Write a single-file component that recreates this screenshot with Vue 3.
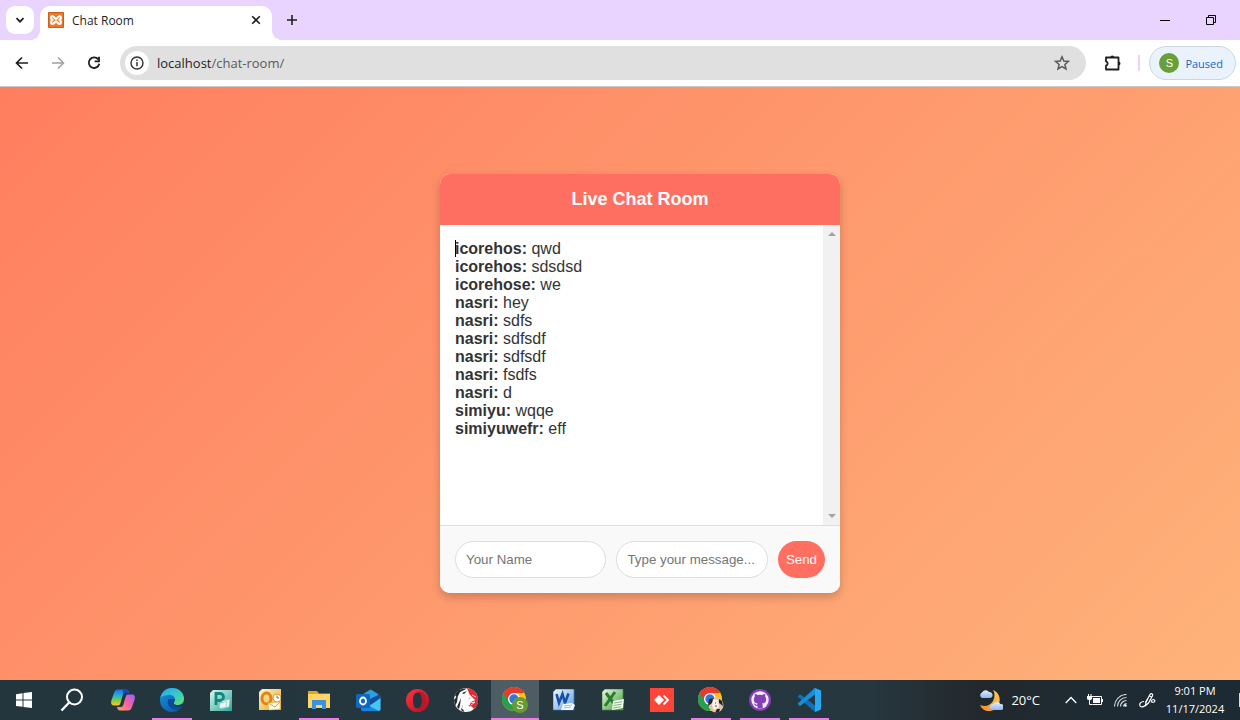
<script setup>
import { ref } from 'vue'

const name = ref('')
const draft = ref('')
const messages = ref([
  { from: 'icorehos', text: 'qwd' },
  { from: 'icorehos', text: 'sdsdsd' },
  { from: 'icorehose', text: 'we' },
  { from: 'nasri', text: 'hey' },
  { from: 'nasri', text: 'sdfs' },
  { from: 'nasri', text: 'sdfsdf' },
  { from: 'nasri', text: 'sdfsdf' },
  { from: 'nasri', text: 'fsdfs' },
  { from: 'nasri', text: 'd' },
  { from: 'simiyu', text: 'wqqe' },
  { from: 'simiyuwefr', text: 'eff' },
])

function send() {
  if (!name.value || !draft.value) return
  messages.value.push({ from: name.value, text: draft.value })
  draft.value = ''
}
</script>

<template>
  <div class="desktop">
    <header class="tabstrip">
      <button class="tab-search" aria-label="Search tabs">
        <svg width="12" height="12" viewBox="0 0 12 12"><path d="M2.5 4.2 6 7.700 9.500 4.200" fill="none" stroke="#1f1f1f" stroke-width="1.8" /></svg>
      </button>
      <div class="tab">
        <svg class="favicon" width="16" height="16" viewBox="0 0 16 16">
          <rect width="16" height="16" rx="1" fill="#c95f1c" />
          <rect x="1" y="1" width="14" height="14" fill="#f0772a" />
          <path d="M5.200 4.400C3.200 3.200 2.200 6.200 4.300 7.900 2.200 9.800 3.200 12.900 5.500 11.600 6.800 11 6.600 9.300 8 9.300S9.200 11 10.500 11.600C12.800 12.900 13.800 9.800 11.700 7.900 13.800 6.200 12.800 3.200 10.800 4.400 9.300 5 9.400 6.800 8 6.800S6.700 5 5.200 4.400Z" fill="none" stroke="#fff" stroke-width="2.200" />
        </svg>
        <span class="tab-title">Chat Room</span>
        <button class="tab-close" aria-label="Close tab">
          <svg width="10" height="10" viewBox="0 0 10 10"><path d="M1.200 1.200 8.800 8.800M8.800 1.200 1.200 8.800" stroke="#1f1f1f" stroke-width="1.600" /></svg>
        </button>
      </div>
      <button class="new-tab" aria-label="New tab">
        <svg width="12" height="12" viewBox="0 0 12 12"><path d="M6 1v10M1 6h10" stroke="#1f1f1f" stroke-width="1.600" /></svg>
      </button>
      <div class="window-controls">
        <button aria-label="Minimize">
          <svg width="10" height="10" viewBox="0 0 10 10"><path d="M0 5.500h10" stroke="#000" /></svg>
        </button>
        <button aria-label="Restore">
          <svg width="10" height="10" viewBox="0 0 10 10"><path d="M.5 2.500h7v7h-7zM2.500 2.500v-2h7v7h-2" fill="none" stroke="#000" /></svg>
        </button>
      </div>
    </header>

    <nav class="toolbar">
      <button class="nav-btn" aria-label="Back">
        <svg width="14" height="14" viewBox="0 0 14 14"><path d="M13 7H2M7 1.500 1.500 7 7 12.500" fill="none" stroke="#1f1f1f" stroke-width="1.700" /></svg>
      </button>
      <button class="nav-btn" aria-label="Forward">
        <svg width="14" height="14" viewBox="0 0 14 14"><path d="M1 7h11M7 1.500 12.500 7 7 12.500" fill="none" stroke="#a0a0a0" stroke-width="1.500" /></svg>
      </button>
      <button class="nav-btn" aria-label="Reload">
        <svg width="14" height="14" viewBox="0 0 14 14"><path d="M11.300 3.400A5.300 5.300 0 1 0 12.300 7.800" fill="none" stroke="#1f1f1f" stroke-width="1.800" /><path d="M12 .8V5.300H7.600" fill="none" stroke="#1f1f1f" stroke-width="1.800" /></svg>
      </button>
      <div class="omnibox">
        <button class="site-info" aria-label="View site information">
          <svg width="14" height="14" viewBox="0 0 14 14"><circle cx="7" cy="7" r="6" fill="none" stroke="#333" stroke-width="1.400" /><path d="M7 6v4.300M7 3.400v1.500" stroke="#333" stroke-width="1.500" /></svg>
        </button>
        <div class="url">localhost<span>/chat-room/</span></div>
        <button class="bookmark" aria-label="Bookmark this tab">
          <svg width="16" height="16" viewBox="0 0 16 16"><path d="M8 1.800 9.800 6l4.600.4-3.500 3 1.100 4.500L8 11.500l-4 2.400 1.100-4.500-3.500-3L6.200 6Z" fill="none" stroke="#5a5a5a" stroke-width="1.500" /></svg>
        </button>
      </div>
      <button class="extensions" aria-label="Extensions">
        <svg width="18" height="18" viewBox="0 0 18 18"><path d="M2 3.500h12.500v12H2v-3.800a2.300 2.300 0 0 0 0-4.400Z" fill="none" stroke="#1f1f1f" stroke-width="1.800" stroke-linejoin="round" /><path d="M6.300 3.500a2 2 0 0 1 4 0ZM14.500 7.500a2 2 0 0 1 0 4Z" fill="#1f1f1f" /></svg>
      </button>
      <span class="divider"></span>
      <button class="profile"><span class="avatar">S</span>Paused</button>
    </nav>

    <main class="page">
      <section class="chat">
        <h1 class="chat-header">Live Chat Room</h1>
        <div class="chat-body">
          <div class="messages">
            <span class="caret"></span>
            <div v-for="(m, i) in messages" :key="i"><strong>{{ m.from }}:</strong> {{ m.text }}</div>
          </div>
          <div class="scrollbar">
            <svg width="8" height="4" viewBox="0 0 8 4"><path d="M0 4 4 0 8 4Z" fill="#a3a3a3" /></svg>
            <svg width="8" height="4" viewBox="0 0 8 4"><path d="M0 0 4 4 8 0Z" fill="#a3a3a3" /></svg>
          </div>
        </div>
        <form class="chat-form" @submit.prevent="send">
          <input v-model="name" type="text" placeholder="Your Name" aria-label="Your Name" />
          <input v-model="draft" type="text" placeholder="Type your message..." aria-label="Type your message" />
          <button type="submit">Send</button>
        </form>
      </section>
    </main>

    <footer class="taskbar">
      <svg class="defs" width="0" height="0" aria-hidden="true">
        <defs>
          <linearGradient id="cop1" x1="0" y1="0" x2="0" y2="1"><stop offset="0" stop-color="#2470dd" /><stop offset=".4" stop-color="#25b5cf" /><stop offset=".7" stop-color="#8acb3b" /><stop offset="1" stop-color="#ffc524" /></linearGradient>
          <linearGradient id="cop2" x1="1" y1="0" x2="0" y2="1"><stop offset="0" stop-color="#a65ff5" /><stop offset=".5" stop-color="#f462a5" /><stop offset="1" stop-color="#ffa346" /></linearGradient>
          <linearGradient id="edge1" x1="0" y1="0" x2="1" y2="1"><stop offset="0" stop-color="#25a6e8" /><stop offset=".5" stop-color="#34c7cf" /><stop offset="1" stop-color="#6be65a" /></linearGradient>
          <linearGradient id="edge2" x1="0" y1="0" x2="1" y2="1"><stop offset="0" stop-color="#1892dc" /><stop offset="1" stop-color="#0d4fa0" /></linearGradient>
          <linearGradient id="opera" x1="0" y1="0" x2="1" y2="1"><stop offset="0" stop-color="#ff3444" /><stop offset="1" stop-color="#b50d20" /></linearGradient>
          <linearGradient id="pub" x1="0" y1="0" x2="1" y2="1"><stop offset="0" stop-color="#ddf7f3" /><stop offset="1" stop-color="#27a597" /></linearGradient>
          <linearGradient id="gold" x1="0" y1="0" x2="1" y2="1"><stop offset="0" stop-color="#fff4cf" /><stop offset="1" stop-color="#eca51c" /></linearGradient>
          <linearGradient id="word" x1="0" y1="0" x2="1" y2="1"><stop offset="0" stop-color="#f4faff" /><stop offset="1" stop-color="#5c9be0" /></linearGradient>
          <linearGradient id="excel" x1="0" y1="0" x2="1" y2="1"><stop offset="0" stop-color="#edf8df" /><stop offset="1" stop-color="#439b3b" /></linearGradient>
          <linearGradient id="moon" x1="1" y1="0" x2="0" y2="1"><stop offset="0" stop-color="#ffd05c" /><stop offset="1" stop-color="#f28c22" /></linearGradient>
          <linearGradient id="cloud" x1="0" y1="0" x2="0" y2="1"><stop offset="0" stop-color="#e5f0ff" /><stop offset="1" stop-color="#8fb5ee" /></linearGradient>
          <g id="chrome">
            <circle cx="12" cy="12" r="12" fill="#fbc116" />
            <path d="M12 12 1.600 6A12 12 0 0 0 12 24l5.200-9Z" fill="#23a050" />
            <path d="M12 6H22.400A12 12 0 0 0 1.600 6L6.800 15Z" fill="#e33b2e" />
            <circle cx="12" cy="12" r="6" fill="#fff" /><circle cx="12" cy="12" r="4.700" fill="#2f76e5" />
          </g>
        </defs>
      </svg>
      <div class="system">
        <button aria-label="Start">
          <svg width="16" height="16" viewBox="0 0 16 16" fill="#fff"><path d="M0 2.200 6.500 1.200V7.500H0ZM7.500 1 16 0V7.500H7.500ZM0 8.500H6.500V14.800L0 13.900ZM7.500 8.500H16V16L7.500 15Z" /></svg>
        </button>
        <button aria-label="Search">
          <svg width="24" height="24" viewBox="0 0 24 24" fill="none" stroke="#fff" stroke-width="2"><circle cx="14.500" cy="9" r="7.500" /><path d="M9.200 14.500 1.500 22.500" stroke-width="2.400" /></svg>
        </button>
      </div>
      <div class="apps">
        <button aria-label="Copilot">
          <svg width="24" height="24" viewBox="0 0 24 24"><path d="M7 1.500H15C17 1.500 17.500 3 18 5H14C12.500 5 12 6 11.500 8L9.500 15C9 17 8 17.500 6 17.500H3C0 17.500-.2 15 .4 12.500L3 5C3.800 2.500 5 1.500 7 1.500Z" fill="url(#cop1)" /><path d="M12 1.500h3c2 0 2.500 1.500 3 3.500h-4c-1 0-1.800.6-2.200 1.800Z" fill="#1649bf" /><path d="M17 22.500H9C7 22.500 6.500 21 6 19H9.500C11.500 19 12 18 12.500 16L14.500 9C15 7 16 6.500 18 6.500H21C24 6.500 24.200 9 23.600 11.500L21 19C20.200 21.500 19 22.500 17 22.500Z" fill="url(#cop2)" /><path d="M14 7.500 10 18" stroke="#24343b" stroke-width="2" /></svg>
        </button>
        <button class="open" aria-label="Edge">
          <svg width="24" height="24" viewBox="0 0 24 24"><circle cx="12" cy="12" r="12" fill="url(#edge2)" /><path d="M.5 10C1.500 4 6 0 12 0c7 0 12 5 12 10.500C24 15 20.500 17.500 16.500 17c-2.500-.3-3.500-1.300-2.500-2.500 3.500-4-1.500-8.500-6-7.500C5 7.500 2 8 .5 10Z" fill="url(#edge1)" /><path d="M8.500 11C6 16 10 22.500 18 22 21 20.500 23 18.500 23.500 16.500c-3.500 2-9 2.500-10-1-.5-1.500 1-2.500.5-4.500Z" fill="#0b4b98" /><path d="M14.200 10.500c1.300 2-1.700 3.500-.4 5.200 1 1.500 5 2 8.200.6l1.700-.5-.5 2.200c-3 1-9 1-10-2.500-.5-1.500.5-3.500 1-5Z" fill="#24343b" /></svg>
        </button>
        <button aria-label="Publisher">
          <svg width="22" height="22" viewBox="0 0 22 22"><path d="M3 1H22V22H0V4Z" fill="url(#pub)" /><path d="M6 16V4.500h4a3.400 3.400 0 0 1 0 7H6" fill="none" stroke="#118a7c" stroke-width="2.800" /><path d="m12 12 8-2-1 8-8 2Z" fill="#f5fcfb" stroke="#6ec3ba" stroke-width=".7" /><path d="m10 14 7-1.500-1 6-7 1Z" fill="#e6f7f5" stroke="#6ec3ba" stroke-width=".6" /></svg>
        </button>
        <button aria-label="Outlook 2010">
          <svg width="22" height="22" viewBox="0 0 22 22"><path d="M3 0H22V21H0V3Z" fill="url(#gold)" /><ellipse cx="7.500" cy="9.500" rx="4.500" ry="5.500" fill="none" stroke="#e38411" stroke-width="3" /><circle cx="18" cy="9" r="4" fill="#fffdf5" stroke="#dca03c" /><path d="M18 6.500V9h2" fill="none" stroke="#777" /><path d="m9 14 12-1v7l-11 1Z" fill="#fffbea" stroke="#e5b04b" stroke-width=".6" /><path d="m9 14 7 4 5-5" fill="none" stroke="#e0a941" /></svg>
        </button>
        <button class="open" aria-label="File Explorer">
          <svg width="22" height="18" viewBox="0 0 22 18"><path d="M0 0h9l2 2.500h11V16H0Z" fill="#e4a51b" /><path d="M0 3h22v14H0Z" fill="#ffd666" /><path d="M4 18V9h14v9h-4v-4H8v4Z" fill="#3d92df" /></svg>
        </button>
        <button aria-label="Outlook">
          <svg width="25" height="23" viewBox="0 0 25 23"><path d="M5 7 14.500.5 24.500 7V20q0 2-2 2H7q-2 0-2-2Z" fill="#126abb" /><path d="M8 4.500 14.500.5 22 5v8l-8 4-6-4Z" fill="#2f9fe0" /><path d="m14 10 10-5v5l-10 6Z" fill="#0f4fa0" /><path d="M24.500 9v11q0 2-2 2H7Z" fill="#47c5f2" /><path d="M5 13l18 9H7q-2 0-2-2Z" fill="#1684d9" /><rect y="5" width="14" height="14" rx="1.500" fill="#0c68c0" /><ellipse cx="7" cy="12" rx="3" ry="3.500" fill="none" stroke="#fff" stroke-width="1.800" /></svg>
        </button>
        <button aria-label="Opera">
          <svg width="23" height="23" viewBox="0 0 23 23"><path fill-rule="evenodd" d="M11.500 0a11.500 11.500 0 1 0 0 23 11.500 11.500 0 0 0 0-23Zm0 3.500c3 0 4.500 3.500 4.500 8s-1.500 8-4.500 8S7 16 7 11.500s1.500-8 4.500-8Z" fill="url(#opera)" /><path d="M11.500 3.500c3-3 9 1 9 8s-6 11-9 8c3 0 4.500-3.500 4.500-8s-1.500-8-4.500-8Z" fill="#b81a2b" /></svg>
        </button>
        <button aria-label="Lion">
          <svg width="24" height="24" viewBox="0 0 24 24"><circle cx="12" cy="12" r="12" fill="#fafafa" /><path d="M13 0A12 12 0 0 1 20 21L16 17l1-4 4-1-5-3-1-4Z" fill="#e12c36" /><path d="M1 7C3 2 8 0 13 .5L6 4 3 10ZM0 12l4-5-1 7-2 4ZM3 19l4-9-1 7-1 4ZM7 22l3-8-1 6 1 4ZM12 16l5 2-4 3ZM8 5l5-2-3 3Z" fill="#22282b" /><path d="m12 4 4 3 5 5-4 2-4-1 2 5 4 2-6 3-5-2 1-8 4-5Z" fill="#fff" /><path d="m14 9 4 1-3 1ZM16 15l5-1-4 3M18 7l4 2" fill="#b41e2a" stroke="#fff" stroke-width=".8" /></svg>
        </button>
        <button class="active" aria-label="Chrome, profile S">
          <svg width="26" height="26" viewBox="0 0 26 26"><use href="#chrome" /><circle cx="18" cy="18" r="8" fill="#659b35" /><text x="18" y="22" text-anchor="middle" class="badge-letter">S</text></svg>
        </button>
        <button aria-label="Word">
          <svg width="22" height="22" viewBox="0 0 22 22"><path d="M3 0H21V21H0V3Z" fill="url(#word)" stroke="#3977c2" stroke-width=".7" /><path d="m3.500 5 2.500 9 3.500-9 2.500 9 3.500-9.500" fill="none" stroke="#1551a7" stroke-width="2.600" /><path d="m10 15 9-1 3 2-2 5H8Z" fill="#f4f9ff" /><path d="m11 17 8-1m-8 3 7-1" stroke="#87aee0" stroke-width=".8" /></svg>
        </button>
        <button aria-label="Excel">
          <svg width="23" height="22" viewBox="0 0 23 22"><path d="M3 0H21V21H0V3Z" fill="url(#excel)" stroke="#438d3c" stroke-width=".7" /><path d="m4 4 9 12M13 3 3 17" stroke="#267e31" stroke-width="3" /><path d="m11 12 11-2-1 9-11 2Z" fill="#f6fcf2" /><path d="m12 14 8-1.300m-8.500 3.800 8-1.300m-8.500 3.800 8-1.300" stroke="#69aa5d" stroke-width=".9" /></svg>
        </button>
        <button aria-label="AnyDesk">
          <svg width="24" height="24" viewBox="0 0 24 24"><path fill="#ff4538" d="M0 0h24v24H0z" /><path d="m9 7 5 5-5 5-5-5Z" fill="#fff" /><path d="m13.500 7.500 4.500 4.500-4.500 4.500" fill="none" stroke="#fff" stroke-width="1.800" /></svg>
        </button>
        <button class="open" aria-label="Chrome, personal profile">
          <svg width="26" height="26" viewBox="0 0 26 26"><use href="#chrome" /><circle cx="18" cy="18" r="7.500" fill="#d8c4b0" /><path d="m11 12 5-1-2 5-4 3ZM21 12l3 2 1 5-4-3ZM19 22l3 0-1 3-4 1Z" fill="#2b2220" /><path d="m15 12 5 1 1 7-5 3-2-4Z" fill="#fff4e9" /><path d="M17 16h1m-1 3h2" stroke="#6b3f2f" /></svg>
        </button>
        <button class="open" aria-label="GitHub Desktop">
          <svg width="22" height="22" viewBox="0 0 22 22"><circle cx="11" cy="11" r="11" fill="#8440b3" /><circle cx="11" cy="11" r="8.700" fill="#f4ecfa" /><path d="M8.500 19.500v-2.700c-2 .5-2.600-.3-3.200-1.500l-.8-.6c1.600-.5 1.900 1.200 3.400 1 .4 0 .7-.8 1-1.100-2.500-.3-4.100-1.500-4.100-4.200 0-1.100.4-2 1-2.700-.2-.7-.2-1.700.2-2.700 1 0 1.800.5 2.600 1a9.500 9.500 0 0 1 4.800 0c.8-.5 1.600-1 2.600-1 .4 1 .4 2 .2 2.700.6.700 1 1.600 1 2.700 0 2.700-1.600 3.900-4.100 4.200.4.400.6 1 .6 1.900v3Z" fill="#8440b3" /></svg>
        </button>
        <button class="open" aria-label="Visual Studio Code">
          <svg width="24" height="24" viewBox="0 0 24 24"><path d="M18 0 24 2.500V21.500L18 24 .5 8.500 3 6.300 18 17.500Z" fill="#0974bd" /><path d="M18 0V6.500L3 18 .5 15.800 17.500.3Z" fill="#178ed8" /><path d="m18 0 6 2.500v19L18 24Z" fill="#29a8ef" /></svg>
        </button>
      </div>
      <div class="tray">
        <button class="weather">
          <svg width="25" height="23" viewBox="0 0 25 23"><path d="M15 1c8 3 9 14 2 19-5 4-13 2-15-4 5 2 10 1 13-4 2-4 2-8 0-11Z" fill="url(#moon)" /><path d="M4 9a3 3 0 0 1 0-5.500A4 4 0 0 1 11 3a3 3 0 0 1 1 6Z" fill="url(#cloud)" /><path d="M15 21a3 3 0 0 1 0-6 4.500 4.500 0 0 1 7.500 0 3 3 0 0 1 .5 6Z" fill="url(#cloud)" /></svg>
          20°C
        </button>
        <button class="chevron" aria-label="Show hidden icons">
          <svg width="12" height="8" viewBox="0 0 12 8"><path d="M.7 7 6 1.500 11.300 7" fill="none" stroke="#fff" stroke-width="1.300" /></svg>
        </button>
        <button class="battery" aria-label="Battery charging">
          <svg width="16" height="12" viewBox="0 0 16 12"><path d="M5 2.500h9.500v8h-9" fill="none" stroke="#fff" /><path d="M6 4h7v5H6zM14.500 5H16v3h-1.500zM0 2h5v2.500q0 1.500-2 1.500h-1Q0 6 0 4.500ZM1 0h1v2H1zM3.500 0h1v2h-1z" fill="#fff" /><path d="M2.500 5v5.500h3" fill="none" stroke="#fff" /></svg>
        </button>
        <button class="wifi" aria-label="Wi-Fi">
          <svg width="13" height="13" viewBox="0 0 13 13" fill="none" stroke="#ddd"><path d="M.5 12.500A12 12 0 0 1 12.500.5M3.500 12.500a9 9 0 0 1 9-9M6.500 12.500a6 6 0 0 1 6-6" stroke-width="1.100" /><path d="M9.500 12.500a3 3 0 0 1 3-3" stroke="#fff" /><circle cx="11.500" cy="11.500" r="1.200" fill="#fff" stroke="none" /></svg>
        </button>
        <button class="pen" aria-label="Pen menu">
          <svg width="17" height="17" viewBox="0 0 17 17" fill="none" stroke="#fff" stroke-width="1.200"><path d="M6.500 13.500 7 10 11 2.500q.8-1.300 2-.7t.5 2L9.500 11Z" /><path d="M10.500 4 13 5.300M9 6.500l-2.500 4M12 9.500c1-2.500 3.500-2.500 3.800-.8s-2 2-3.800.8M5 9.500C1.500 9.500.5 12 .8 13.500s2.700 2.200 5.200 0" /></svg>
        </button>
        <time class="clock" datetime="2024-11-17T21:01"><span>9:01 PM</span><span>11/17/2024</span></time>
        <span class="edge"></span>
      </div>
    </footer>
  </div>
</template>

<style>
body {
  margin: 0;
}
</style>

<style scoped>
* {
  box-sizing: border-box;
}
button {
  border: 0;
  padding: 0;
  background: none;
  font-family: inherit;
  color: inherit;
  display: flex;
  align-items: center;
  justify-content: center;
  flex-shrink: 0;
}
svg {
  display: block;
  flex-shrink: 0;
}
.desktop {
  display: flex;
  flex-direction: column;
  min-height: 100vh;
  font-family: "Open Sans", "Noto Sans", sans-serif;
  font-size: 12px;
  color: #1f1f1f;
}

.tabstrip {
  display: flex;
  align-items: center;
  height: 40px;
  padding: 0 6px;
  background: #e8d4fe;
}
.tab-search {
  width: 28px;
  height: 28px;
  margin-right: 6px;
  border-radius: 9px;
  background: #fff;
}
.tab {
  position: relative;
  display: flex;
  align-items: center;
  align-self: flex-end;
  width: 232px;
  height: 34px;
  padding: 0 8px 6px;
  border-radius: 10px 10px 0 0;
  background: #fff;
}
.tab::before,
.tab::after {
  content: "";
  position: absolute;
  bottom: 0;
  width: 10px;
  height: 10px;
}
.tab::before {
  right: 100%;
  background: radial-gradient(circle at 0 0, transparent 10px, #fff 10px);
}
.tab::after {
  left: 100%;
  background: radial-gradient(circle at 100% 0, transparent 10px, #fff 10px);
}
.tab-title {
  flex: 1;
  margin-left: 8px;
}
.tab-close {
  width: 16px;
  height: 16px;
}
.new-tab {
  width: 28px;
  height: 28px;
  margin-left: 6px;
}
.window-controls {
  display: flex;
  margin-left: auto;
}
.window-controls button {
  width: 46px;
  height: 40px;
}

.toolbar {
  display: flex;
  align-items: center;
  height: 47px;
  padding: 0 4px;
  border-bottom: 1px solid #c9c9c9;
  background: #fff;
}
.nav-btn {
  width: 36px;
  height: 34px;
}
.omnibox {
  flex: 1;
  display: flex;
  align-items: center;
  height: 34px;
  margin-left: 8px;
  padding: 0 16px 0 5px;
  border-radius: 17px;
  background: #e0e0e0;
}
.site-info {
  width: 24px;
  height: 24px;
  border-radius: 50%;
  background: #fff;
}
.url {
  flex: 1;
  margin-left: 8px;
  font-size: 13px;
}
.url span {
  color: #5a5a5a;
}
.extensions {
  width: 34px;
  height: 34px;
  margin-left: 10px;
}
.divider {
  width: 2px;
  height: 16px;
  margin: 0 9px 0 8px;
  background: #e8d4fe;
}
.profile {
  height: 34px;
  padding: 0 12px 0 9px;
  gap: 6px;
  border: 1px solid #cdd7e3;
  border-radius: 17px;
  background: #eaf2fb;
  color: #1565d0;
  font-size: 11px;
}
.avatar {
  width: 20px;
  height: 20px;
  border-radius: 50%;
  background: #689f38;
  color: #fff;
  font: 11px/20px "Liberation Sans", sans-serif;
  text-align: center;
}

/* The page's canvas runs 40px past the window's right edge. */
.page {
  flex: 1;
  display: flex;
  align-items: center;
  justify-content: center;
  padding-left: 40px;
  background: linear-gradient(135deg, #ff7e5f, #feb47b) 0 0 / calc(100% + 40px) 100% no-repeat;
  font-family: "Liberation Sans", Arial, sans-serif;
}
.chat {
  width: 400px;
  max-width: 100%;
  border-radius: 10px;
  overflow: hidden;
  background: #fff;
  box-shadow: 0 4px 10px rgba(0, 0, 0, 0.2);
}
.chat-header {
  margin: 0;
  padding: 15px;
  background: #ff6f61;
  color: #fff;
  font-size: 18px;
  line-height: 21px;
  text-align: center;
}
.chat-body {
  display: flex;
  height: 300px;
}
.messages {
  position: relative;
  flex: 1;
  padding: 15px;
  overflow: hidden;
  font-size: 16px;
  line-height: 18px;
  color: #333;
}
.caret {
  position: absolute;
  left: 15px;
  top: 15px;
  width: 1px;
  height: 17px;
  background: #000;
}
.scrollbar {
  display: flex;
  flex-direction: column;
  align-items: center;
  justify-content: space-between;
  width: 17px;
  padding: 7px 0;
  background: #f1f1f1;
}
.chat-form {
  display: flex;
  gap: 10px;
  padding: 15px;
  border-top: 1px solid #ddd;
  background: #f9f9f9;
}
.chat-form input {
  flex: 1;
  min-width: 0;
  height: 37px;
  padding: 0 10px;
  border: 1px solid #ddd;
  border-radius: 20px;
  background: #fff;
  font-family: inherit;
  outline: none;
}
.chat-form input::placeholder {
  color: #757575;
  opacity: 1;
}
.chat-form button {
  height: 37px;
  padding: 0 8px;
  border-radius: 20px;
  background: #ff6f61;
  color: #fff;
}

.taskbar {
  display: flex;
  height: 40px;
  background: linear-gradient(90deg, #24363d, #26373f 70%, #22282c 79%, #1e2b33 88%, #1c2a33);
  color: #fff;
}
.defs {
  position: absolute;
}
.system,
.apps {
  display: flex;
}
.apps {
  gap: 1px;
  margin-left: 3px;
}
.system button,
.apps button {
  width: 48px;
  height: 40px;
}
.apps .open {
  background: linear-gradient(#f07be4, #f07be4) center bottom / 40px 2px no-repeat;
}
.apps .active {
  background: linear-gradient(#f07be4, #f07be4) center bottom / 48px 2px no-repeat, #4e5c63;
}
.badge-letter {
  font: 11px "Liberation Sans", sans-serif;
  fill: #fff;
}
.tray {
  display: flex;
  align-items: center;
  margin-left: auto;
}
.weather {
  gap: 8px;
  font-size: 13px;
}
.chevron {
  margin-left: 25px;
}
.battery {
  margin-left: 10px;
}
.wifi {
  margin-left: 11px;
}
.pen {
  margin-left: 12px;
}
.clock {
  display: flex;
  flex-direction: column;
  align-items: center;
  width: 60px;
  margin: 0 14px 0 9px;
  font-size: 11px;
  line-height: 18px;
}
.edge {
  width: 1px;
  height: 14px;
  background: #d5dadc;
}
</style>
